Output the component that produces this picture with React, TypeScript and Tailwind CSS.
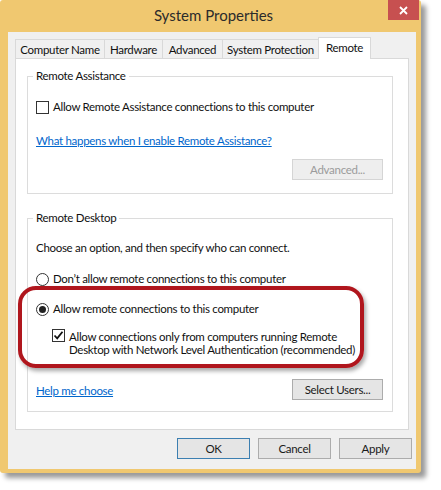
import React from "react";

function Btn({ children, w, disabled, def }: { children: React.ReactNode; w: string; disabled?: boolean; def?: boolean }) {
  return (
    <div
      className={
        "flex h-[21px] items-center justify-center border bg-[#e5e5e5] " +
        w +
        " " +
        (def ? "border-[#3c7fb1] text-[#1a1a1a]" : disabled ? "border-[#d5d5d5] bg-[#eeeeee] text-[#9b9b9b]" : "border-[#acacac] text-[#1a1a1a]")
      }
    >
      {children}
    </div>
  );
}

function Radio({ checked }: { checked?: boolean }) {
  return (
    <div className="flex h-[13px] w-[13px] shrink-0 items-center justify-center rounded-full border border-[#333] bg-white">
      {checked && <div className="h-[7px] w-[7px] rounded-full bg-[#222]" />}
    </div>
  );
}

function Check({ checked }: { checked?: boolean }) {
  return (
    <div className="flex h-[13px] w-[13px] shrink-0 items-center justify-center border border-[#333] bg-white">
      {checked && (
        <svg width="11" height="11" viewBox="0 0 11 11">
          <path d="M1.5 5.5 L4.2 8.3 L9.5 1.8" fill="none" stroke="#111" strokeWidth="1.8" />
        </svg>
      )}
    </div>
  );
}

function Tab({ label, w, selected }: { label: string; w: string; selected?: boolean }) {
  if (selected) {
    return (
      <div className={"relative z-10 -mb-px -ml-px flex h-[22px] items-center justify-center border border-b-0 border-[#d9d9d9] bg-white pb-[2px] whitespace-nowrap " + w}>
        {label}
      </div>
    );
  }
  return (
    <div className={"-ml-px flex h-[19px] items-center justify-center border border-b-0 border-[#d9d9d9] bg-[#f0f0f0] pt-px whitespace-nowrap " + w}>
      {label}
    </div>
  );
}

export default function App() {
  return (
    <div className="relative h-[490px] w-[441px] overflow-hidden bg-white font-['Lato','Liberation_Sans',sans-serif] text-[11.5px] tracking-[-0.3px] text-[#111]">
      <div className="flex h-[473px] w-[421px] flex-col rounded-[3px] bg-[#f0c870] shadow-[5px_5px_5px_rgba(0,0,0,0.4)]">
        {/* title bar */}
        <div className="relative flex h-[32px] shrink-0 items-center justify-center text-[15px] tracking-normal text-[#2b2b2b]">
          <span className="mt-[-2px] ml-[6px]">System Properties</span>
          <div className="absolute top-0 right-[2px] flex h-[20px] w-[31px] items-center justify-center bg-[#c75050]">
            <svg width="9" height="9" viewBox="0 0 9 9">
              <path d="M1 1 L8 8 M8 1 L1 8" stroke="white" strokeWidth="1.8" />
            </svg>
          </div>
        </div>
        {/* client */}
        <div className="mr-[5px] mb-[4px] ml-[8px] flex flex-1 flex-col bg-[#f0f0f0] px-[7px] pt-[5px]">
          {/* tabs */}
          <div className="flex h-[21px] items-end pl-px">
            <Tab label="Computer Name" w="w-[90px]" />
            <Tab label="Hardware" w="w-[59px]" />
            <Tab label="Advanced" w="w-[61px]" />
            <Tab label="System Protection" w="w-[97px]" />
            <Tab label="Remote" w="w-[53px]" selected />
          </div>
          {/* panel */}
          <div className="flex h-[372px] w-[394px] flex-col border border-[#d9d9d9] bg-white pl-[11px]">
            {/* Remote Assistance group */}
            <div className="mt-[17px] flex h-[118px] w-[366px] flex-col border border-[#dcdcdc] pl-[8px]">
              <div className="-mt-[9px] -ml-[3px] w-fit bg-white px-[3px] leading-[16px]">Remote Assistance</div>
              <div className="mt-[15px] flex items-center gap-[4px] leading-[16px]">
                <Check />
                <span>Allow Remote Assistance connections to this computer</span>
              </div>
              <div className="mt-[18px] leading-[16px] text-[#0066cc] underline">What happens when I enable Remote Assistance?</div>
              <div className="mt-[10px] flex justify-end pr-[9px]">
                <Btn w="w-[91px]" disabled>
                  Advanced...
                </Btn>
              </div>
            </div>
            {/* Remote Desktop group */}
            <div className="mt-[24px] flex h-[194px] w-[366px] flex-col border border-[#dcdcdc] pl-[8px]">
              <div className="-mt-[9px] -ml-[3px] w-fit bg-white px-[3px] leading-[16px]">Remote Desktop</div>
              <div className="mt-[14px] leading-[16px]">Choose an option, and then specify who can connect.</div>
              <div className="mt-[15px] flex items-center gap-[4px] leading-[16px]">
                <Radio />
                <span>Don’t allow remote connections to this computer</span>
              </div>
              <div className="mt-[14px] flex items-center gap-[4px] leading-[16px]">
                <Radio checked />
                <span>Allow remote connections to this computer</span>
              </div>
              <div className="mt-[13px] flex items-start gap-[4px] pl-[16px] leading-[13px]">
                <div className="mt-[-1px]">
                  <Check checked />
                </div>
                <span>
                  Allow connections only from computers running Remote
                  <br />
                  Desktop with Network Level Authentication (recommended)
                </span>
              </div>
              <div className="mt-[23px] flex items-center justify-between pr-[9px]">
                <span className="mt-[3px] text-[#0066cc] underline">Help me choose</span>
                <Btn w="w-[91px]">Select Users...</Btn>
              </div>
            </div>
          </div>
          {/* bottom buttons */}
          <div className="mt-[8px] -mr-[3px] flex justify-end gap-[8px]">
            <Btn w="w-[73px]" def>
              OK
            </Btn>
            <Btn w="w-[73px]">Cancel</Btn>
            <Btn w="w-[73px]">Apply</Btn>
          </div>
        </div>
      </div>
      {/* annotation */}
      <div className="pointer-events-none absolute top-[286px] left-[18px] h-[82px] w-[346px] rounded-[18px] border-[4px] border-[#b0161d] shadow-[2px_3px_4px_rgba(0,0,0,0.35)]" />
    </div>
  );
}
